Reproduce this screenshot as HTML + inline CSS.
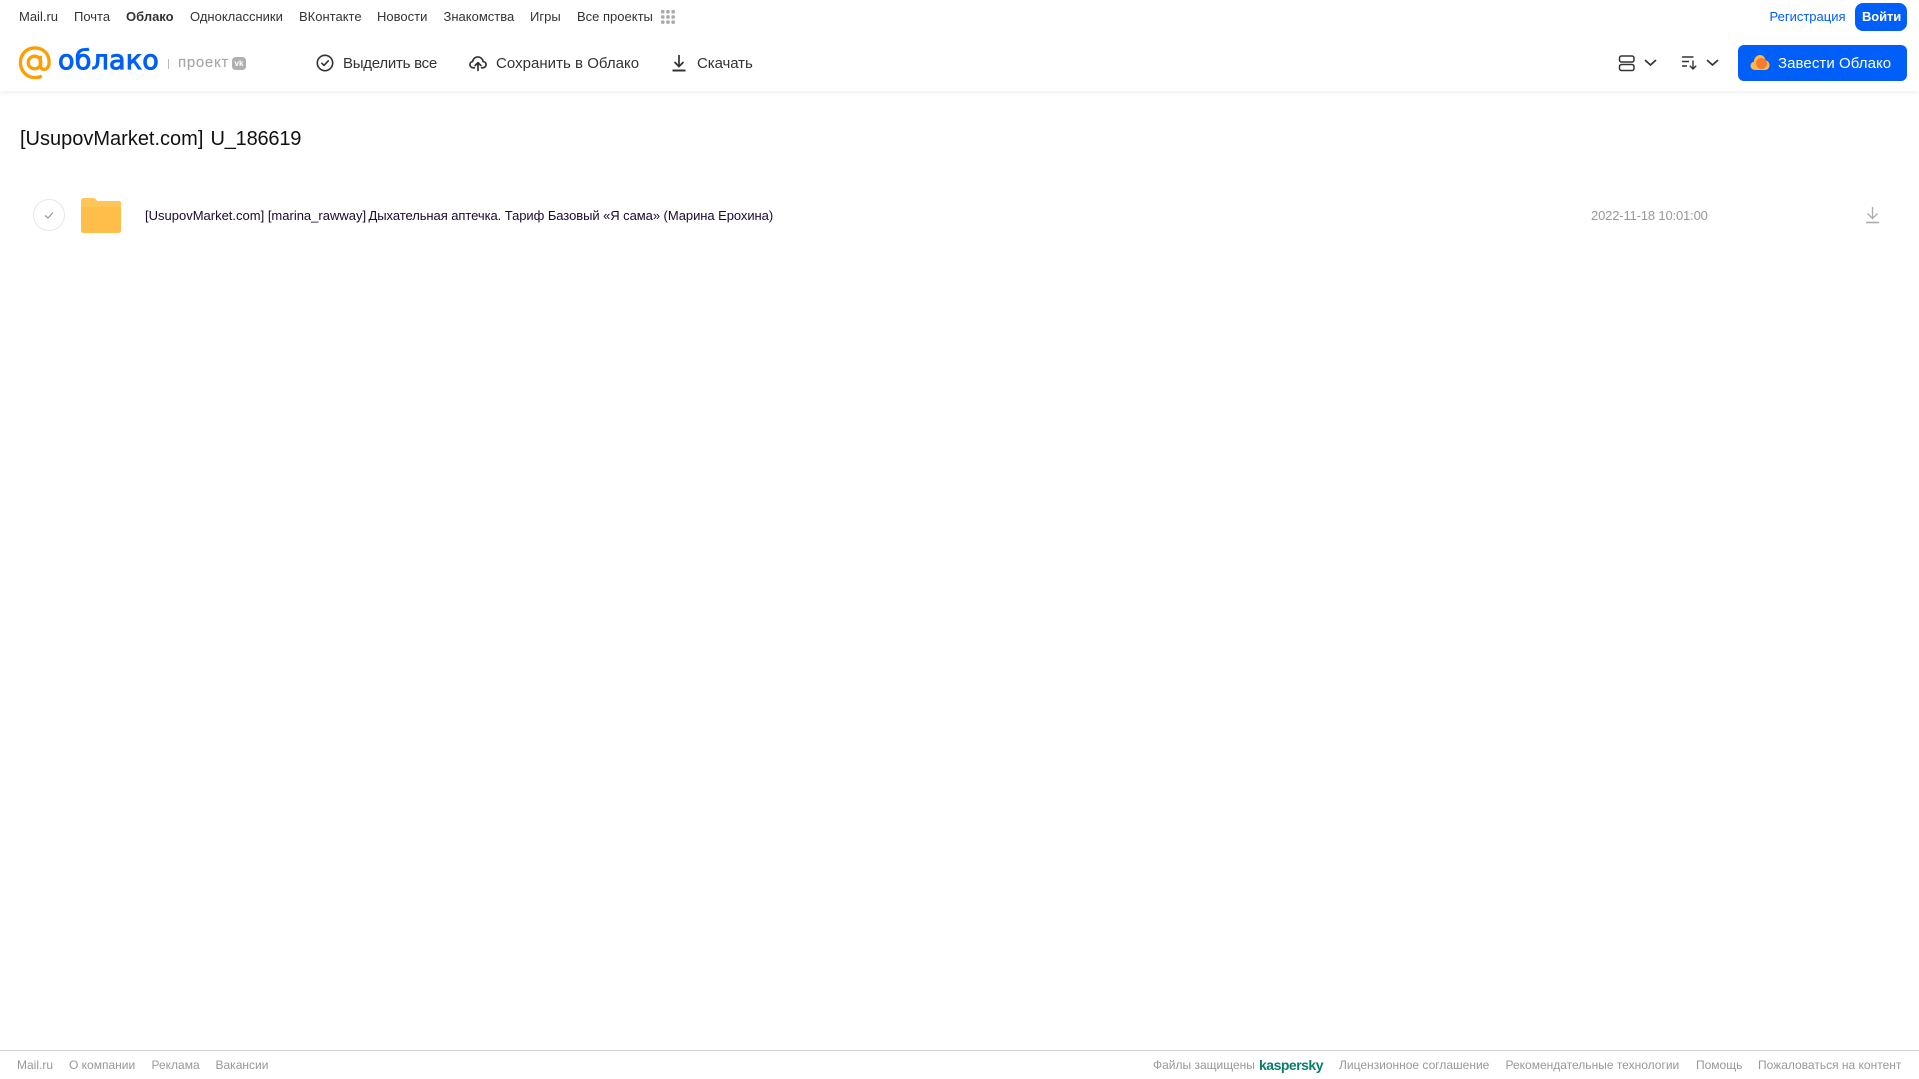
<!DOCTYPE html>
<html lang="ru"><head><meta charset="utf-8"><title>Облако</title>
<style>
html,body{margin:0;padding:0;background:#fff}
body{width:1919px;height:1079px;position:relative;overflow:hidden;font-family:"Liberation Sans",sans-serif}
.t{position:absolute;white-space:nowrap;line-height:1}
.n{font-size:13px;top:10px;color:#333}
.h{font-size:15px;top:56px;color:#333}
.f{font-size:12px;top:1059px;color:#999;}
svg{position:absolute;display:block}
</style></head><body>
<div style="position:absolute;left:0;top:0;width:1919px;height:91px;background:#fff;box-shadow:0 1px 6px rgba(0,0,0,.08)"></div>

<span class="t n" style="left:19px">Mail.ru</span>
<span class="t n" style="left:74px">Почта</span>
<span class="t n" style="left:126px;font-weight:bold">Облако</span>
<span class="t n" style="left:190px">Одноклассники</span>
<span class="t n" style="left:299px">ВКонтакте</span>
<span class="t n" style="left:377px">Новости</span>
<span class="t n" style="left:443.500px">Знакомства</span>
<span class="t n" style="left:530px">Игры</span>
<span class="t n" style="left:577px">Все проекты</span>
<svg style="left:660px;top:9px" width="16" height="16" fill="#aaa"><rect x="1" y="1" width="3.500" height="3.500" rx="1"/><rect x="6.200" y="1" width="3.500" height="3.500" rx="1"/><rect x="11.400" y="1" width="3.500" height="3.500" rx="1"/><rect x="1" y="6.200" width="3.500" height="3.500" rx="1"/><rect x="6.200" y="6.200" width="3.500" height="3.500" rx="1"/><rect x="11.400" y="6.200" width="3.500" height="3.500" rx="1"/><rect x="1" y="11.400" width="3.500" height="3.500" rx="1"/><rect x="6.200" y="11.400" width="3.500" height="3.500" rx="1"/><rect x="11.400" y="11.400" width="3.500" height="3.500" rx="1"/></svg>

<span class="t" style="left:1769.500px;top:10px;font-size:13px;color:#005ff9">Регистрация</span>
<div style="position:absolute;left:1855px;top:3px;width:52px;height:28px;border-radius:8px;background:#005ff9"></div>
<span class="t" style="left:1862px;top:10px;font-size:13px;color:#fff;font-weight:bold;letter-spacing:-.1px">Войти</span>

<svg style="left:18px;top:46px" width="34" height="34" viewBox="0 0 35 35" fill="none" stroke="#ff9e00"><path d="M24.500 31C22.500 32 20 32.500 17.500 32.500C9 32.500 2.500 25.800 2.500 17S9 2 17.500 2S32 8 32 16.500C32 21 30.500 24 27 24C24 24 23 22 23 19V10" stroke-width="3.400"/><circle cx="17" cy="17" r="6.500" stroke-width="3.400"/></svg>
<span class="t" style="left:58px;top:47px;font-size:27px;color:#005ff9;font-family:'DejaVu Sans',sans-serif;-webkit-text-stroke:1px #005ff9;letter-spacing:.2px">облако</span>
<div style="position:absolute;left:168px;top:59px;width:1px;height:10px;background:#bbb"></div>
<span class="t" style="left:178px;top:55px;font-size:15px;color:#a6a6a6;-webkit-text-stroke:.15px #a6a6a6;letter-spacing:.7px">проект</span>
<div style="position:absolute;left:232px;top:57px;width:14px;height:13px;border-radius:3.500px;background:#b0b0b0;color:#fff;font:bold 8px/13px 'Liberation Sans',sans-serif;text-align:center">vk</div>

<svg style="left:316px;top:54px" width="18" height="18" fill="none" stroke="#333" stroke-width="1.600"><circle cx="9" cy="9" r="7.700"/><path d="M5.800 9.200L8 11.400L12.300 6.800" stroke-linecap="round" stroke-linejoin="round"/></svg>
<span class="t h" style="left:343px;letter-spacing:-.25px">Выделить все</span>

<svg style="left:469px;top:55px" width="18" height="16.500" viewBox="0 0 20 18" fill="none" stroke="#333" stroke-width="1.900" stroke-linecap="round" stroke-linejoin="round"><path d="M6 14H4.500C2.500 14 1 12.400 1 10.500C1 8.700 2.300 7.300 4 7.100C4.500 4.200 6.800 2 9.800 2C12.800 2 15.200 4.200 15.700 7.100C17.500 7.300 19 8.700 19 10.500C19 12.400 17.500 14 15.500 14H14"/><path d="M10 17V8.500M6.800 11.500L10 8.300L13.200 11.500"/></svg>
<span class="t h" style="left:496px;letter-spacing:.03px">Сохранить в Облако</span>

<svg style="left:671px;top:54px" width="16" height="18" fill="none" stroke="#333" stroke-width="1.700"><path d="M8 1V12.500M3.500 8L8 12.500L12.500 8"/><path d="M1.500 16.500H14.500" stroke-width="2"/></svg>
<span class="t h" style="left:697px;letter-spacing:-.08px">Скачать</span>

<svg style="left:1617.500px;top:55px" width="18" height="17" fill="none" stroke="#333" stroke-width="1.500"><rect x="1.500" y="1" width="14.500" height="6" rx="2"/><rect x="1.500" y="9.500" width="14.500" height="6" rx="2"/></svg>
<svg style="left:1643.500px;top:59px" width="13" height="8" fill="none" stroke="#333" stroke-width="1.700" stroke-linecap="round" stroke-linejoin="round"><path d="M1.500 1.500L6.500 6L11.500 1.500"/></svg>
<svg style="left:1680.500px;top:55px" width="17" height="16" fill="none" stroke="#333" stroke-width="1.400"><path d="M1 2H12.500M1 6.500H8M1 11H6M12 5.500V14M8.800 10.800L12 14L15.200 10.800"/></svg>
<svg style="left:1705.500px;top:59px" width="13" height="8" fill="none" stroke="#333" stroke-width="1.700" stroke-linecap="round" stroke-linejoin="round"><path d="M1.500 1.500L6.500 6L11.500 1.500"/></svg>

<div style="position:absolute;left:1738px;top:45px;width:169px;height:36px;border-radius:6px;background:#005ff9"></div>
<svg style="left:1750px;top:54px" width="20" height="17"><path d="M5 16C2.500 16 .5 14.200 .5 11.800C.5 9.800 2 8.200 3.800 7.800C4.200 3.800 6.800 1 10 1C13 1 15 3.300 15.700 6.400C18 6.800 19.500 8.800 19.500 11.200C19.500 14 17.500 16 15 16Z" fill="#ffb64a"/><circle cx="11.500" cy="9.500" r="5.500" fill="#f57c2c"/></svg>
<span class="t h" style="left:1778px;color:#fff;letter-spacing:.07px">Завести Облако</span>

<span class="t" style="left:20px;top:129px;font-size:20px;color:#111">[UsupovMarket.com]</span>
<span class="t" style="left:210.500px;top:129px;font-size:20px;color:#111;letter-spacing:-.2px">U_186619</span>

<svg style="left:33px;top:199px" width="32" height="32" fill="none"><circle cx="16" cy="16" r="15.500" stroke="#e8e8e8"/><path d="M12 16.500L15 19L20 13.500" stroke="#999" stroke-width="1.300"/></svg>
<svg style="left:81px;top:198px" width="40" height="35"><path d="M0 3C0 1 1 0 3 0H12C14 0 15 1 16 3H38C39.200 3 40 4 40 5V32C40 33.800 39 35 37 35H3C1 35 0 33.800 0 32Z" fill="#ffc556"/><path d="M0 9H40V32C40 33.800 39 35 37 35H3C1 35 0 33.800 0 32Z" fill="#ffbd4a"/></svg>
<span class="t" style="left:145px;top:209px;font-size:13px;color:#1a0a2e">[UsupovMarket.com] [marina_rawway]</span>
<span class="t" style="left:368.500px;top:209px;font-size:13px;color:#1a0a2e;letter-spacing:-.06px">Дыхательная аптечка. Тариф Базовый «Я сама» (Марина Ерохина)</span>
<span class="t" style="left:1591px;top:209px;font-size:13px;color:#999;letter-spacing:-.16px">2022-11-18 10:01:00</span>
<svg style="left:1865px;top:206px" width="15" height="18" fill="none" stroke="#aaa" stroke-width="1.300"><path d="M7.500 1V12M2.500 7.500L7.500 12.500L12.500 7.500"/><path d="M1 16.500H14" stroke-width="1.600"/></svg>

<div style="position:absolute;left:0;top:1050px;width:1919px;height:1px;background:#d4d4d4"></div>
<span class="t f" style="left:17px">Mail.ru</span>
<span class="t f" style="left:69px">О компании</span>
<span class="t f" style="left:151.500px">Реклама</span>
<span class="t f" style="left:215.500px">Вакансии</span>
<span class="t f" style="left:1153px">Файлы защищены</span>
<span class="t" style="left:1259px;top:1058px;font-size:14px;font-weight:bold;color:#0a7d68;letter-spacing:-.5px">kaspersky</span>
<span class="t f" style="left:1339px">Лицензионное соглашение</span>
<span class="t f" style="left:1505.500px">Рекомендательные технологии</span>
<span class="t f" style="left:1696px">Помощь</span>
<span class="t f" style="left:1758px">Пожаловаться на контент</span>
</body></html>
